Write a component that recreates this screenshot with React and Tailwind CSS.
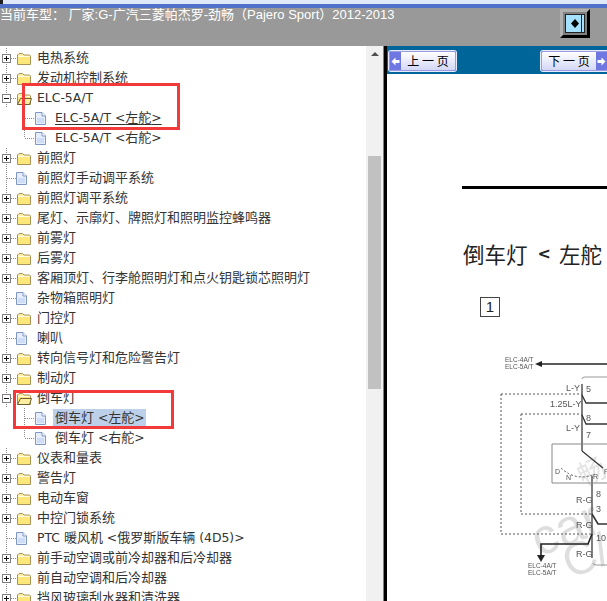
const rows = [
  ["p", "电热系统"],
  ["p", "发动机控制系统"],
  ["m", "ELC-5A/T"],
  ["c", "ELC-5A/T <左舵>", "u"],
  ["l", "ELC-5A/T <右舵>"],
  ["p", "前照灯"],
  ["d", "前照灯手动调平系统"],
  ["p", "前照灯调平系统"],
  ["p", "尾灯、示廓灯、牌照灯和照明监控蜂鸣器"],
  ["p", "前雾灯"],
  ["p", "后雾灯"],
  ["p", "客厢顶灯、行李舱照明灯和点火钥匙锁芯照明灯"],
  ["d", "杂物箱照明灯"],
  ["p", "门控灯"],
  ["d", "喇叭"],
  ["p", "转向信号灯和危险警告灯"],
  ["p", "制动灯"],
  ["m", "倒车灯"],
  ["c", "倒车灯 <左舵>", "s"],
  ["l", "倒车灯 <右舵>"],
  ["p", "仪表和量表"],
  ["p", "警告灯"],
  ["p", "电动车窗"],
  ["p", "中控门锁系统"],
  ["d", "PTC 暖风机 <俄罗斯版车辆 (4D5)>"],
  ["p", "前手动空调或前冷却器和后冷却器"],
  ["p", "前自动空调和后冷却器"],
  ["p", "挡风玻璃刮水器和清洗器"],
];

function Runs({ text }) {
  return text.split(/([\x00-\x7f]+)/).map((part, i) =>
    i % 2 ? <span key={i} className="text-[12.4px]">{part}</span> : part
  );
}

function Folder({ x, open }) {
  return (
    <g transform={`translate(${x} 0)`}>
      <path d="M1.5 7 L3 5.5 H6.5 L8 7 H13.5 L14.5 8 V16.5 H1.5 Z" fill="#fff0a8" stroke="#a8925a" strokeWidth="1" />
      <rect x="2" y="9" width="12" height="7" fill="#fde67a" />
      <path d="M2 8.5 H14" stroke="#fffbe0" />
      {open && <path d="M1.5 16.5 L4.5 10.5 H15.5 L13.5 16.5 Z" fill="#fdeea0" stroke="#6e6030" strokeWidth="1" />}
    </g>
  );
}

function Doc({ x }) {
  return (
    <g transform={`translate(${x} 0)`}>
      <path d="M1.5 4.5 H8 L11.5 8 V16.5 H1.5 Z" fill="#e6eefb" stroke="#7f97c2" strokeWidth="1" />
      <path d="M8 4.5 V8 H11.5" fill="#ffffff" stroke="#7f97c2" strokeWidth="1" />
      <rect x="3" y="10" width="7" height="5" fill="#cfdcf5" />
    </g>
  );
}

function Glyph({ kind }) {
  const dots = "#8a8a8a";
  if (kind === "c" || kind === "l") {
    return (
      <svg width="55" height="20" className="shrink-0">
        <path d={kind === "c" ? "M24.5 0 V20" : "M24.5 0 V10"} stroke={dots} strokeDasharray="1 1" fill="none" />
        <path d="M25 10.5 H35" stroke={dots} strokeDasharray="1 1" fill="none" />
        <Doc x={34} />
      </svg>
    );
  }
  return (
    <svg width="37" height="20" className="shrink-0">
      <path d="M6.5 0 V20" stroke={dots} strokeDasharray="1 1" fill="none" />
      <path d="M7 10.5 H17" stroke={dots} strokeDasharray="1 1" fill="none" />
      {kind !== "d" && (
        <g>
          <rect x="2.5" y="6.5" width="8" height="8" fill="#fff" stroke="#808080" />
          <path d="M4 10.5 H9" stroke="#111" />
          {kind === "p" && <path d="M6.5 8 V13" stroke="#111" />}
        </g>
      )}
      {kind === "d" ? <Doc x={15} /> : <Folder x={16} open={kind === "m"} />}
    </svg>
  );
}

function NavButton({ dir, label }) {
  const arrow = (
    <span className="w-[11px] h-[18px] bg-[#6f78e0] flex items-center justify-center">
      <svg width="9" height="9" viewBox="0 0 9 9">
        <path d={dir === "prev" ? "M0.5 4.5 L4.5 0.5 V3 H8.5 V6 H4.5 V8.5 Z" : "M8.5 4.5 L4.5 0.5 V3 H0.5 V6 H4.5 V8.5 Z"} fill="#fff" />
      </svg>
    </span>
  );
  return (
    <div className="h-[20px] w-[67px] flex items-center justify-between border border-[#9a9ee0] bg-gradient-to-b from-[#ffffff] to-[#d4d8f6] rounded-[2px] shadow-[0_0_0_1px_#e8eaff]">
      {dir === "prev" && arrow}
      <span className="flex-1 text-center text-[12px] leading-none text-black whitespace-pre" style={{ fontFamily: "'Noto Sans CJK SC', sans-serif" }}>{label}</span>
      {dir === "next" && arrow}
    </div>
  );
}

function Diagram() {
  const t = { fontFamily: "'Liberation Sans', sans-serif", fill: "#555" };
  const w = { fontFamily: "'Liberation Sans', sans-serif", fill: "#dedede" };
  return (
    <svg width="221" height="280" viewBox="386 321 221 280" className="block blur-[0.4px]">
      <text x="536" y="556" fontSize="50" transform="rotate(-22 540 550)" {...w}>car</text>
      <text x="566" y="578" fontSize="46" transform="rotate(-22 570 570)" {...w}>C/</text>
      <text x="576" y="482" fontSize="28" fill="#e4e4e4" transform="rotate(-25 590 470)" style={{ fontFamily: "'Noto Sans CJK SC', sans-serif" }}>畅</text>
      <text x="504" y="362" fontSize="6.5" {...t}>ELC-4A/T</text>
      <text x="504" y="369" fontSize="6.5" {...t}>ELC-5A/T</text>
      <path d="M537 364 H607" stroke="#222" strokeWidth="1.4" />
      <path d="M534 364 L541 361 V367 Z" fill="#222" />
      <path d="M581 379 Q581 377 584 377 H607" stroke="#999" fill="none" />
      <path d="M581 384 V451" stroke="#555" strokeWidth="1.5" fill="none" />
      <path d="M591 476 V558" stroke="#555" strokeWidth="1.5" fill="none" />
      <path d="M581 395 L585 403 H607 M581 415 L585 424 H607" stroke="#333" strokeWidth="1.3" fill="none" />
      <path d="M500 394 H581 M500 394 V534 H590 M520 414 H581 M520 414 V514 H590" stroke="#555" strokeDasharray="2 2" fill="none" />
      <path d="M607 444 H551 V483 H607" stroke="#888" fill="none" />
      <path d="M581 451 L602 468" stroke="#333" strokeWidth="1.2" />
      <path d="M560 468 Q575 482 594 474" stroke="#555" strokeDasharray="2 2" fill="none" />
      <path d="M591 514 L597 524 H607" stroke="#333" strokeWidth="1.6" fill="none" />
      <path d="M591 534 L587 544 H540 V556" stroke="#222" strokeWidth="1.6" fill="none" />
      <path d="M536 555 H544 L540 562 Z" fill="#222" />
      <path d="M592 563 Q592 565 595 565 H607" stroke="#999" fill="none" />
      <text x="565" y="391" fontSize="9" {...t}>L-Y</text>
      <text x="585" y="392" fontSize="9" {...t}>5</text>
      <text x="549" y="407" fontSize="9" {...t}>1.25L-Y</text>
      <text x="585" y="421" fontSize="9" {...t}>8</text>
      <text x="565" y="431" fontSize="9" {...t}>L-Y</text>
      <text x="585" y="438" fontSize="9" {...t}>7</text>
      <text x="554" y="474" fontSize="7" {...t}>D</text>
      <text x="565" y="480" fontSize="7" {...t}>N</text>
      <text x="592" y="479" fontSize="7" {...t}>R</text>
      <text x="603" y="474" fontSize="7" {...t}>P</text>
      <text x="595" y="497" fontSize="9" {...t}>8</text>
      <text x="575" y="503" fontSize="9" {...t}>R-G</text>
      <text x="595" y="512" fontSize="9" {...t}>3</text>
      <text x="575" y="528" fontSize="9" {...t}>R-G</text>
      <text x="595" y="541" fontSize="9" {...t}>10</text>
      <text x="575" y="557" fontSize="9" {...t}>R-G</text>
      <text x="527" y="568" fontSize="6.5" {...t}>ELC-4A/T</text>
      <text x="527" y="575" fontSize="6.5" {...t}>ELC-5A/T</text>
    </svg>
  );
}

export default function App() {
  return (
    <div className="relative w-[607px] h-[601px] overflow-hidden bg-white" style={{ fontFamily: "'Liberation Sans', 'Noto Sans CJK SC', sans-serif" }}>
      <div className="h-[4px] bg-[#dfe8f8]"><div className="w-[3px] h-[4px] bg-[#222]" /></div>
      <div className="h-[4px] bg-[#4f72c8]" />
      <div className="h-[38px] bg-[#999999] flex items-start justify-between pr-[17px]">
        <div className="text-[13px] leading-[14px] text-white whitespace-pre">当前车型： 厂家:G-广汽三菱帕杰罗-劲畅（Pajero Sport）2012-2013</div>
        <div className="mt-[1px] w-[30px] h-[29px] bg-[#808080] border-t-[3px] border-l-[3px] border-t-[#b0b0b0] border-l-[#b0b0b0] border-r-[3px] border-b-[3px] border-r-black border-b-black flex items-center justify-center">
          <div className="w-[20px] h-[19px] bg-[#a6e0ff] border border-[#222] flex items-center justify-end relative">
            <svg width="8" height="9" viewBox="0 0 8 9" className="absolute left-[5px] top-[4px]">
              <path d="M0 4.5 L4 0 L8 4.5 L4 9 Z" fill="#000" />
            </svg>
            <div className="w-[1px] h-full bg-[#222] mr-[2px]" />
          </div>
        </div>
      </div>
      <div className="flex h-[555px]">
        <div className="w-[366px] pt-[2px] text-[13px] text-[#333] overflow-hidden" style={{ fontFamily: "'DejaVu Sans', 'Noto Sans CJK SC', sans-serif" }}>
          {rows.map(([k, label, st], i) => (
            <div key={i} className="h-5 flex items-center whitespace-pre">
              <Glyph kind={k} />
              {st === "u" ? (
                <span className="leading-[15px] underline underline-offset-2 mb-[2px]"><Runs text={label} /></span>
              ) : st === "s" ? (
                <span className="leading-[17px] bg-[#bcd0ea] -ml-[2px] pl-[2px] pr-[1px] mb-[2px]"><Runs text={label} /></span>
              ) : (
                <span className="leading-[15px] mb-[2px]"><Runs text={label} /></span>
              )}
            </div>
          ))}
        </div>
        <div className="w-[17px] bg-[#f1f1f1] flex flex-col items-center pt-[6px]">
          <div className="w-0 h-0 border-l-[4px] border-r-[4px] border-b-[4px] border-l-transparent border-r-transparent border-b-[#505050]" />
          <div className="mt-[100px] w-[13px] h-[233px] bg-[#c1c1c1]" />
        </div>
        <div className="w-[1px] bg-[#808080]" />
        <div className="w-[3px] bg-black" />
        <div className="flex-1 min-w-0 flex flex-col">
          <div className="h-[28px] bg-[#006699] flex items-start justify-between pt-[5px] pl-[2px] -mr-[1px]">
            <NavButton dir="prev" label="上 一 页" />
            <NavButton dir="next" label="下 一 页" />
          </div>
          <div className="flex-1 relative overflow-hidden">
            <div className="ml-[75px] mt-[112px] h-[3px] bg-black" />
            <div className="ml-[76px] mt-[51px] h-[28px] text-[21.5px] leading-[28px] text-[#222] whitespace-pre flex items-center" style={{ fontFamily: "'Noto Sans CJK SC', sans-serif" }}>
              <span>倒车灯</span>
              <span className="ml-[10px] font-bold text-[16px]" style={{ fontFamily: "'DejaVu Sans', sans-serif" }}>&lt;</span>
              <span className="ml-[8px]">左舵</span>
            </div>
            <div className="ml-[93px] mt-[29px] w-[20px] h-[20px] border border-[#444] text-[15px] leading-[18px] text-center text-[#222]">1</div>
            <div className="absolute left-0 top-[247px]"><Diagram /></div>
          </div>
        </div>
      </div>
      <div className="absolute left-[22px] top-[83px] w-[158px] h-[47px] border-[3px] border-[#f33a3a]" />
      <div className="absolute left-[13px] top-[390px] w-[161px] h-[39px] border-[3px] border-[#f33a3a]" />
    </div>
  );
}
